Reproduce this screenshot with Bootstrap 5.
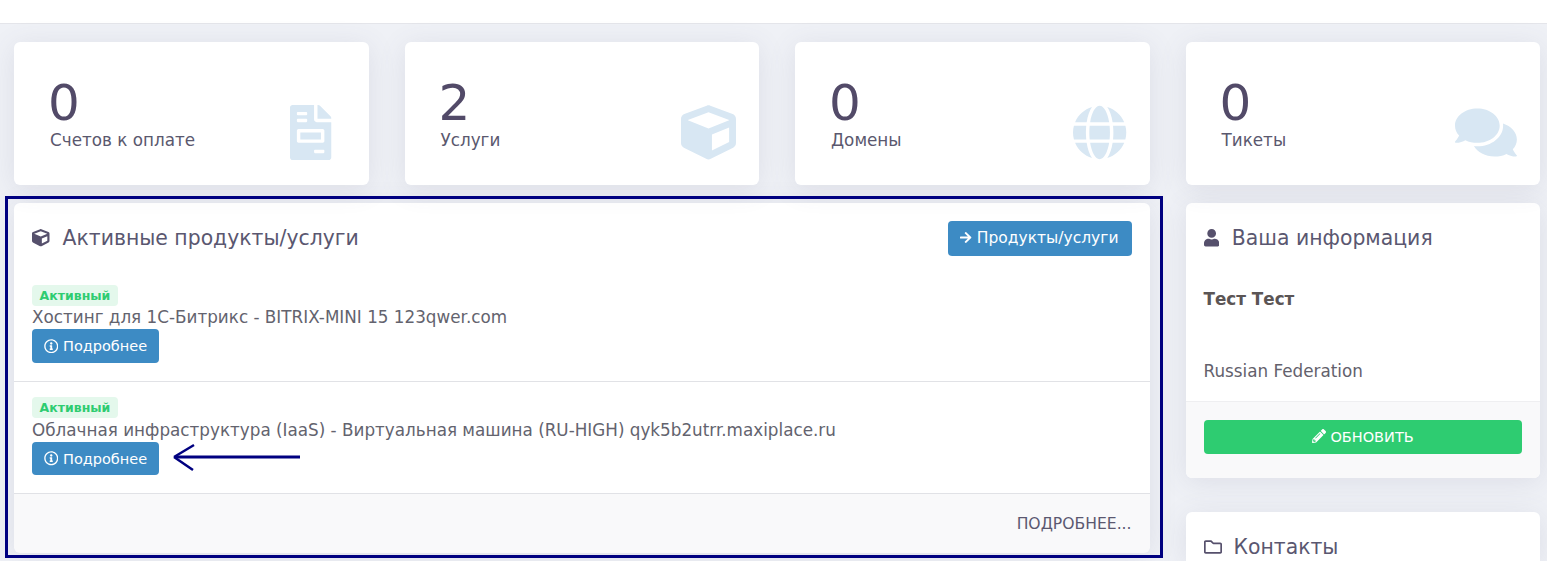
<!DOCTYPE html>
<html lang="ru">
<head>
  <meta charset="UTF-8">
  <meta name="viewport" content="width=device-width, initial-scale=1.0">
  <title>Личный кабинет</title>
  <link href="https://cdn.jsdelivr.net/npm/bootstrap@5.3.0/dist/css/bootstrap.min.css" rel="stylesheet">
  <style>
    html, body { height: 561px; overflow: hidden; }
    body { position: relative; background: #eff1f6; font-family: "DejaVu Sans", sans-serif; font-size: 16.8px; color: #5f5d68; }
    .top-strip { height: 24px; background: #fff; border-bottom: 1px solid #e4e5ea; }
    .dash-grid { display: grid; grid-template-columns: repeat(4, 1fr); column-gap: 36px; padding: 18px 7px 0 14px; align-items: start; }
    .dash-card { background: #fff; border-radius: 6px; box-shadow: 0 4px 28px rgba(90, 90, 120, .12); }
    .stat-card { height: 143px; margin-bottom: 18px; padding: 36px 23px 0 34px; position: relative; }
    .stat-num { font-size: 50px; line-height: 50px; color: #524a68; }
    .stat-label { font-size: 16.8px; line-height: 24px; color: #5a586e; margin-left: 2px; }
    .stat-icon { fill: #d8e7f3; height: 55px; margin-top: 27px; }
    .icon-file { margin-right: 14px; }
    .main-card { grid-column: span 3; height: 349px; }
    .side-stack { display: flex; flex-direction: column; gap: 34px; }
    .panel-head { height: 70px; padding: 0 18px; }
    .panel-title { font-size: 20.4px; font-weight: 400; color: #5a5770; margin: 0; }
    .head-icon { height: 17.5px; fill: #56506c; margin-right: 5px; }
    .blue-btn { background: #3d8bc4; color: #fff; border: 0; border-radius: 4px; }
    .blue-btn svg { fill: #fff; }
    .head-btn { height: 35px; width: 184px; padding: 2px 0 0; font-size: 15.5px; }
    .head-btn svg { height: 13px; vertical-align: -1px; }
    .more-btn { height: 34px; width: 127px; padding: 2px 0 0; display: block; font-size: 14.5px; }
    .more-btn svg { height: 14.5px; vertical-align: -2px; }
    .svc-item { height: 112px; padding: 15px 18px 0; border-bottom: 1px solid #e1e2e6; font-size: 16.8px; line-height: 22px; color: #63636e; }
    .svc-item.first-item { height: 109px; padding-top: 12px; }
    .svc-item .more-btn { height: 33px; }
    .svc-item.first-item .more-btn { height: 34px; }
    .svc-badge { display: block; width: 86px; height: 21px; background: #e4f8ec; color: #2ecc71; border-radius: 4px; font-size: 12.5px; font-weight: 700; line-height: 21px; text-align: center; }
    .svc-name { margin-top: 1px; margin-bottom: 1px; white-space: nowrap; }
    .first-item .svc-name { margin-top: 0; margin-bottom: 1px; }
    .main-foot { background: #f9f9fa; height: 59px; border-radius: 0 0 6px 6px; padding: 2px 18px 0; font-size: 15.6px; color: #5b5870; }
    .info-card { height: 275px; display: flex; flex-direction: column; }
    .info-body { height: 128px; padding: 14px 18px 0; line-height: 24px; color: #63616c; }
    .info-name { font-weight: 700; margin-bottom: 48px; color: #5b5555; }
    .info-foot { flex: 1; background: #f9f9fa; border-top: 1px solid #efeff1; padding: 18px; border-radius: 0 0 6px 6px; }
    .green-btn { background: #2ecc71; color: #fff; border: 0; border-radius: 4px; height: 34px; width: 100%; font-size: 14.5px; padding: 2px 0 0; }
    .green-btn svg { height: 14px; fill: #fff; vertical-align: -1px; }
    .contact-card { height: 49px; border-radius: 6px 6px 0 0; }
    .folder-icon { fill: #56506c; height: 18px; }
    .mark-frame { position: absolute; left: 5px; top: 196px; width: 1158px; height: 362px; border: 3px solid #000080; pointer-events: none; }
    .mark-arrow { position: absolute; left: 170px; top: 440px; width: 135px; height: 36px; }
  </style>
</head>
<body>
<div class="top-strip"></div>
<div class="dash-grid">
  <div class="dash-card stat-card d-flex justify-content-between">
    <div><div class="stat-num">0</div><div class="stat-label">Счетов к оплате</div></div>
    <svg class="stat-icon icon-file" viewBox="0 0 384 512"><path d="M377 105L279.1 7c-4.5-4.5-10.6-7-17-7H256v128h128v-6.1c0-6.3-2.5-12.4-7-16.9z"/><path fill-rule="evenodd" d="M224 136V0H24C10.7 0 0 10.7 0 24v464c0 13.3 10.7 24 24 24h336c13.3 0 24-10.7 24-24V160H248c-13.2 0-24-10.8-24-24zM72 64h80c4.4 0 8 3.6 8 8v16c0 4.4-3.6 8-8 8H72c-4.4 0-8-3.6-8-8V72c0-4.4 3.6-8 8-8zm0 64h80c4.4 0 8 3.6 8 8v16c0 4.4-3.6 8-8 8H72c-4.4 0-8-3.6-8-8v-16c0-4.4 3.6-8 8-8zm160 288h80c4.4 0 8 3.6 8 8v16c0 4.4-3.6 8-8 8h-80c-4.4 0-8-3.6-8-8v-16c0-4.4 3.6-8 8-8zM80 224h224c8.8 0 16 7.2 16 16v96c0 8.8-7.2 16-16 16H80c-8.8 0-16-7.2-16-16v-96c0-8.8 7.2-16 16-16zm16 32v64h192v-64z"/></svg>
  </div>
  <div class="dash-card stat-card d-flex justify-content-between">
    <div><div class="stat-num">2</div><div class="stat-label">Услуги</div></div>
    <svg class="stat-icon" viewBox="0 0 512 512"><path d="M239.1 6.3l-208 78c-18.7 7-31.1 25-31.1 45v225.1c0 18.2 10.3 34.8 26.5 42.9l208 104c13.5 6.8 29.4 6.8 42.9 0l208-104c16.3-8.1 26.5-24.8 26.5-42.9V129.3c0-20-12.4-37.9-31.1-44.9l-208-78C262 2.2 250 2.2 239.1 6.3zM256 68.4l192 72v1.1l-192 78-192-78v-1.1l192-72zm32 356V275.5l160-65v133.9l-160 80z"/></svg>
  </div>
  <div class="dash-card stat-card d-flex justify-content-between">
    <div><div class="stat-num">0</div><div class="stat-label">Домены</div></div>
    <svg class="stat-icon" viewBox="0 0 496 512"><path d="M336.5 160C322 70.7 287.8 8 248 8s-74 62.7-88.5 152h177zM152 256c0 22.2 1.2 43.5 3.3 64h185.3c2.1-20.5 3.3-41.8 3.3-64s-1.2-43.5-3.3-64H155.3c-2.1 20.5-3.3 41.8-3.3 64zm324.7-96c-28.6-67.9-86.5-120.4-158-141.6 24.4 33.8 41.2 84.7 50 141.6h108zM177.2 18.4C105.8 39.6 47.8 92.1 19.3 160h108c8.7-56.9 25.5-107.8 49.9-141.6zM487.4 192H372.7c2.1 21 3.3 42.5 3.3 64s-1.2 43-3.3 64h114.6c5.5-20.5 8.6-41.8 8.6-64s-3.1-43.5-8.5-64zM120 256c0-21.5 1.2-43 3.3-64H8.6C3.2 212.5 0 233.8 0 256s3.2 43.5 8.6 64h114.6c-2-21-3.2-42.5-3.2-64zm39.5 96c14.5 89.3 48.7 152 88.5 152s74-62.7 88.5-152h-177zm159.3 141.6c71.4-21.2 129.4-73.7 158-141.6h-108c-8.8 56.9-25.6 107.8-50 141.6zM19.3 352c28.6 67.9 86.5 120.4 158 141.6-24.4-33.8-41.2-84.7-50-141.6h-108z"/></svg>
  </div>
  <div class="dash-card stat-card d-flex justify-content-between">
    <div><div class="stat-num">0</div><div class="stat-label">Тикеты</div></div>
    <svg class="stat-icon" viewBox="0 0 576 512"><path d="M416 192c0-88.4-93.1-160-208-160S0 103.6 0 192c0 34.3 14.1 65.9 38 92-13.4 30.2-35.5 54.2-35.8 54.5-2.2 2.3-2.8 5.7-1.5 8.7S4.8 352 8 352c36.6 0 66.9-12.3 88.7-25 32.2 15.7 70.3 25 111.3 25 114.9 0 208-71.6 208-160zm122 220c23.9-26 38-57.7 38-92 0-66.9-53.5-124.2-129.3-148.1.9 6.6 1.3 13.3 1.3 20.1 0 105.9-107.7 192-240 192-10.8 0-21.3-.8-31.7-1.9C207.8 439.6 281.8 480 368 480c41 0 79.1-9.2 111.3-25 21.8 12.7 52.1 25 88.7 25 3.2 0 6.1-1.9 7.3-4.8 1.3-2.9.7-6.3-1.5-8.7-.3-.3-22.4-24.2-35.8-54.5z"/></svg>
  </div>

  <div class="dash-card main-card">
    <div class="panel-head d-flex align-items-center justify-content-between">
      <h5 class="panel-title d-flex align-items-center gap-2">
        <svg class="head-icon" viewBox="0 0 512 512"><path d="M239.1 6.3l-208 78c-18.7 7-31.1 25-31.1 45v225.1c0 18.2 10.3 34.8 26.5 42.9l208 104c13.5 6.8 29.4 6.8 42.9 0l208-104c16.3-8.1 26.5-24.8 26.5-42.9V129.3c0-20-12.4-37.9-31.1-44.9l-208-78C262 2.2 250 2.2 239.1 6.3zM256 68.4l192 72v1.1l-192 78-192-78v-1.1l192-72zm32 356V275.5l160-65v133.9l-160 80z"/></svg>
        Активные продукты/услуги
      </h5>
      <button type="button" class="btn blue-btn head-btn">
        <svg viewBox="0 0 448 512"><path d="M190.5 66.9l22.2-22.2c9.4-9.4 24.6-9.4 33.9 0L441 239c9.4 9.4 9.4 24.6 0 33.9L246.6 467.3c-9.4 9.4-24.6 9.4-33.9 0l-22.2-22.2c-9.5-9.5-9.3-25 .4-34.3L311.4 296H24c-13.3 0-24-10.7-24-24v-32c0-13.3 10.7-24 24-24h287.4L190.9 101.2c-9.8-9.3-10-24.8-.4-34.3z"/></svg>
        Продукты/услуги
      </button>
    </div>
    <div class="svc-item first-item">
      <span class="svc-badge">Активный</span>
      <div class="svc-name">Хостинг для 1С-Битрикс - BITRIX-MINI 15 123qwer.com</div>
      <button type="button" class="btn blue-btn more-btn">
        <svg viewBox="0 0 512 512"><path d="M256 8C119.043 8 8 119.083 8 256c0 136.997 111.043 248 248 248s248-111.003 248-248C504 119.083 392.957 8 256 8zm0 448c-110.532 0-200-89.431-200-200 0-110.495 89.472-200 200-200 110.491 0 200 89.471 200 200 0 110.53-89.431 200-200 200zm0-338c23.196 0 42 18.804 42 42s-18.804 42-42 42-42-18.804-42-42 18.804-42 42-42zm56 254c0 6.627-5.373 12-12 12h-88c-6.627 0-12-5.373-12-12v-24c0-6.627 5.373-12 12-12h12v-64h-12c-6.627 0-12-5.373-12-12v-24c0-6.627 5.373-12 12-12h64c6.627 0 12 5.373 12 12v100h12c6.627 0 12 5.373 12 12v24z"/></svg>
        Подробнее
      </button>
    </div>
    <div class="svc-item">
      <span class="svc-badge">Активный</span>
      <div class="svc-name">Облачная инфраструктура (IaaS) - Виртуальная машина (RU-HIGH) qyk5b2utrr.maxiplace.ru</div>
      <button type="button" class="btn blue-btn more-btn">
        <svg viewBox="0 0 512 512"><path d="M256 8C119.043 8 8 119.083 8 256c0 136.997 111.043 248 248 248s248-111.003 248-248C504 119.083 392.957 8 256 8zm0 448c-110.532 0-200-89.431-200-200 0-110.495 89.472-200 200-200 110.491 0 200 89.471 200 200 0 110.53-89.431 200-200 200zm0-338c23.196 0 42 18.804 42 42s-18.804 42-42 42-42-18.804-42-42 18.804-42 42-42zm56 254c0 6.627-5.373 12-12 12h-88c-6.627 0-12-5.373-12-12v-24c0-6.627 5.373-12 12-12h12v-64h-12c-6.627 0-12-5.373-12-12v-24c0-6.627 5.373-12 12-12h64c6.627 0 12 5.373 12 12v100h12c6.627 0 12 5.373 12 12v24z"/></svg>
        Подробнее
      </button>
    </div>
    <div class="main-foot d-flex align-items-center justify-content-end">ПОДРОБНЕЕ...</div>
  </div>

  <div class="side-stack">
    <div class="dash-card info-card">
      <div class="panel-head d-flex align-items-center">
        <h5 class="panel-title d-flex align-items-center gap-2">
          <svg class="head-icon" viewBox="0 0 448 512"><path d="M224 256c70.7 0 128-57.3 128-128S294.7 0 224 0 96 57.3 96 128s57.3 128 128 128zm89.6 32h-16.7c-22.2 10.2-46.9 16-72.9 16s-50.6-5.8-72.9-16h-16.7C60.2 288 0 348.2 0 422.4V464c0 26.5 21.5 48 48 48h352c26.5 0 48-21.5 48-48v-41.6c0-74.2-60.2-134.4-134.4-134.4z"/></svg>
          Ваша информация
        </h5>
      </div>
      <div class="info-body">
        <div class="info-name">Тест Тест</div>
        <div>Russian Federation</div>
      </div>
      <div class="info-foot">
        <button type="button" class="btn green-btn">
          <svg viewBox="0 0 512 512"><path d="M497.9 142.1l-46.1 46.1c-4.7 4.7-12.3 4.7-17 0l-111-111c-4.7-4.7-4.7-12.3 0-17l46.1-46.1c18.7-18.7 49.1-18.7 67.9 0l60.1 60.1c18.8 18.7 18.8 49.1 0 67.9zM284.2 99.8L21.6 362.4.4 483.9c-2.9 16.4 11.4 30.6 27.8 27.8l121.5-21.3 262.6-262.6c4.7-4.7 4.7-12.3 0-17l-111-111c-4.8-4.7-12.4-4.7-17.1 0zM124.1 339.9c-5.5-5.5-5.5-14.3 0-19.8l154-154c5.5-5.5 14.3-5.5 19.8 0s5.5 14.3 0 19.8l-154 154c-5.5 5.5-14.3 5.5-19.8 0zM88 424h48v36.3l-64.5 11.3-31.1-31.1L51.7 376H88v48z"/></svg>
          ОБНОВИТЬ
        </button>
      </div>
    </div>
    <div class="dash-card contact-card">
      <div class="panel-head d-flex align-items-center">
        <h5 class="panel-title d-flex align-items-center gap-2">
          <svg class="folder-icon me-1" viewBox="0 0 512 512"><path d="M464 128H272l-54.63-54.63c-6-6-14.14-9.37-22.63-9.37H48C21.49 64 0 85.49 0 112v288c0 26.51 21.49 48 48 48h416c26.51 0 48-21.49 48-48V176c0-26.51-21.49-48-48-48zm0 272H48V112h140.12l54.63 54.63c6 6 14.14 9.37 22.63 9.37H464v224z"/></svg>
          Контакты
        </h5>
      </div>
    </div>
  </div>
</div>

<div class="mark-frame"></div>
<svg class="mark-arrow" viewBox="0 0 135 36" fill="none" stroke="#000080" stroke-width="2">
  <path stroke-width="3" d="M6 17H130"/>
  <path stroke-width="2.5" d="M4 17L24 5M4 17L23 30"/>
</svg>
</body>
</html>
